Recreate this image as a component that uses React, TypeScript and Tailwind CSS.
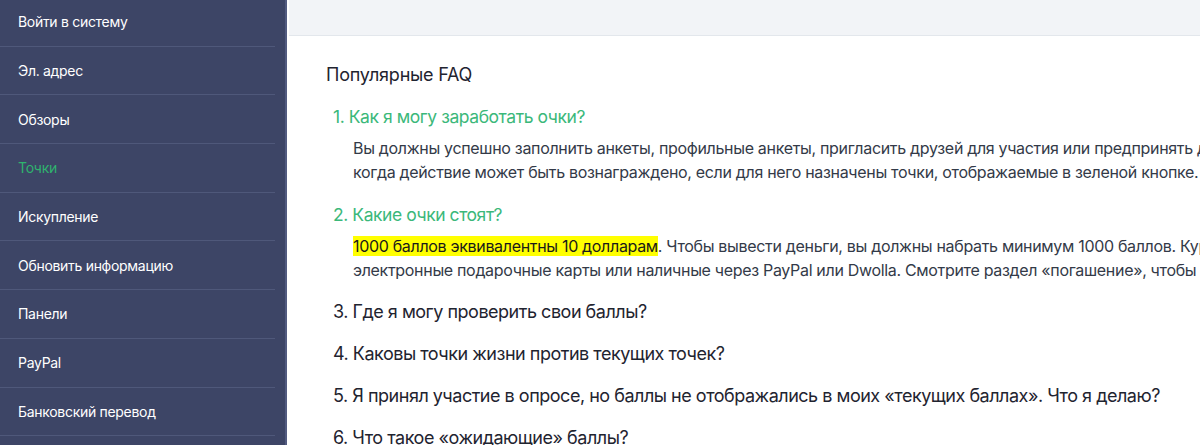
import React from 'react';

const NAV = [
  'Войти в систему',
  'Эл. адрес',
  'Обзоры',
  'Точки',
  'Искупление',
  'Обновить информацию',
  'Панели',
  'PayPal',
  'Банковский перевод',
];

const OTHER = [
  'Где я могу проверить свои баллы?',
  'Каковы точки жизни против текущих точек?',
  'Я принял участие в опросе, но баллы не отображались в моих «текущих баллах». Что я делаю?',
  'Что такое «ожидающие» баллы?',
];

export default function App() {
  return (
    <div
      className="flex h-[445px] w-[1200px] overflow-hidden bg-white"
      style={{ fontFamily: 'Inter, "Noto Sans", sans-serif' }}
    >
      {/* Sidebar */}
      <aside className="w-[287px] shrink-0 border-r-2 border-[#525b80] bg-[#3d4566]">
        <ul className="-mt-[2px] pr-[10px]">
          {NAV.map((label) => (
            <li
              key={label}
              className="flex h-[48.7px] items-center border-b border-[#4f587a] pl-[18px] text-[14px] tracking-[-0.3px]"
            >
              <span className={label === 'Точки' ? 'text-[#2fb36e]' : 'text-white'}>{label}</span>
            </li>
          ))}
        </ul>
      </aside>

      {/* Main */}
      <main className="min-w-0 flex-1 overflow-hidden pl-[2px]">
        <div className="h-[36px] border-b border-[#e3e7ec] bg-[#f2f4f7]" />
        <div className="whitespace-nowrap pl-[37px] pt-[27px] text-[#222a3a]">
          <h2 className="text-[18px] leading-[24px] tracking-[-0.012em] text-[#1f2430]">Популярные FAQ</h2>

          <div className="mt-[18px] pl-[7px] text-[17.5px] leading-[24px] tracking-[-0.025em] text-[#3bb87a]">
            1. Как я могу заработать очки?
          </div>
          <div className="mt-[7px] pl-[27px] text-[16px] leading-[24px] tracking-[-0.02em] text-[#333a48]">
            <p>
              Вы должны успешно заполнить анкеты, профильные анкеты, пригласить друзей для участия или предпринять другие действия,
            </p>
            <p>когда действие может быть вознаграждено, если для него назначены точки, отображаемые в зеленой кнопке.</p>
          </div>

          <div className="mt-[19px] pl-[7px] text-[17.5px] leading-[24px] tracking-[-0.025em] text-[#3bb87a]">
            2. Какие очки стоят?
          </div>
          <div className="mt-[7px] pl-[27px] text-[16px] leading-[24px] tracking-[-0.02em] text-[#333a48]">
            <p>
              <span className="bg-[#ffff00] text-[#1a1a1a]">1000 баллов эквивалентны 10 долларам</span>. Чтобы вывести деньги, вы должны набрать минимум 1000 баллов. Курс обмена на
            </p>
            <p>электронные подарочные карты или наличные через PayPal или Dwolla. Смотрите раздел «погашение», чтобы узнать больше.</p>
          </div>

          <ul className="mt-[18px] flex flex-col gap-[18px] pl-[7px] text-[18px] leading-[24px] tracking-[-0.027em] text-[#1f2430]">
            {OTHER.map((q, i) => (
              <li key={q}>
                {i + 3}. {q}
              </li>
            ))}
          </ul>
        </div>
      </main>
    </div>
  );
}
